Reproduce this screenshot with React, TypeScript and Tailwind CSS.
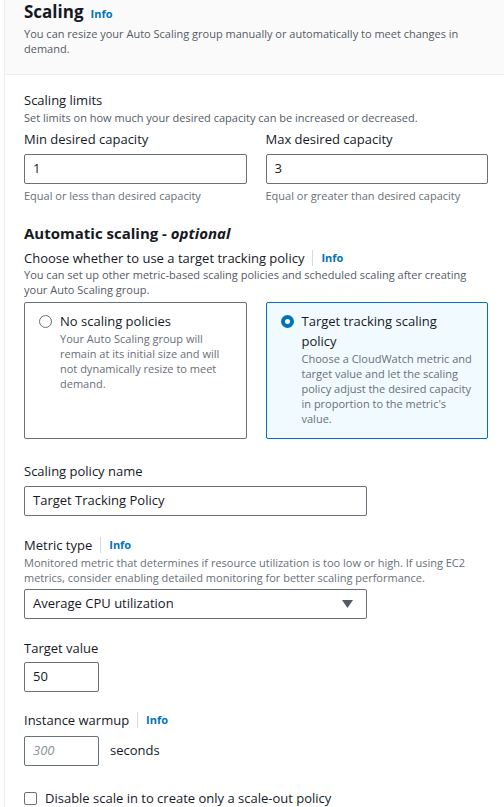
import React from 'react'

const font = { fontFamily: '"Open Sans", "Noto Sans", Arial, sans-serif' }

function Info({ sep }: { sep?: boolean }) {
  return (
    <span className="inline-flex items-center">
      {sep && <span className="mx-[8px] h-[16px] w-px bg-[#d5dbdb]" />}
      <span className="text-[11px] font-bold text-[#0073bb]">Info</span>
    </span>
  )
}

function Label({ children }: { children: React.ReactNode }) {
  return <div className="text-[13px] leading-[20px] text-[#16191f]">{children}</div>
}

function Desc({ children }: { children: React.ReactNode }) {
  return <div className="text-[11px] leading-[15px] text-[#687078]">{children}</div>
}

function Box({ value, w, italic }: { value: string; w: string; italic?: boolean }) {
  return (
    <div
      className={`${w} h-[30px] border border-[#687078] rounded-[2px] bg-white px-[8px] flex items-center text-[13px] ${
        italic ? 'italic text-[#879596]' : 'text-[#16191f]'
      }`}
    >
      {value}
    </div>
  )
}

export default function App() {
  return (
    <div style={font} className="w-[504px] h-[807px] bg-white overflow-hidden">
      <div className="ml-[4px] border-l border-[#eaeded] h-full">
        <div className="bg-[#fafafa] border-b border-[#eaeded] pl-[19px] pr-[20px] pt-[1px] h-[75px]">
          <div className="flex items-baseline gap-[7px]">
            <span className="text-[17px] font-bold leading-[22px] text-[#16191f]">Scaling</span>
            <Info />
          </div>
          <div className="mt-[3px] text-[11px] leading-[15px] text-[#545b64]">
            You can resize your Auto Scaling group manually or automatically to meet changes in demand.
          </div>
        </div>

        <div className="pl-[19px] pr-[16px] pt-[15px]">
          <Label>Scaling limits</Label>
          <div className="text-[11px] leading-[15px] text-[#545b64]">
            Set limits on how much your desired capacity can be increased or decreased.
          </div>

          <div className="mt-[4px] grid grid-cols-2 gap-x-[19px]">
            <div>
              <Label>Min desired capacity</Label>
              <div className="mt-[5px]">
                <Box value="1" w="w-full" />
              </div>
              <div className="mt-[4px]">
                <Desc>Equal or less than desired capacity</Desc>
              </div>
            </div>
            <div>
              <Label>Max desired capacity</Label>
              <div className="mt-[5px]">
                <Box value="3" w="w-full" />
              </div>
              <div className="mt-[4px]">
                <Desc>Equal or greater than desired capacity</Desc>
              </div>
            </div>
          </div>

          <div className="mt-[20px] text-[15px] font-bold leading-[20px] text-[#16191f]">
            Automatic scaling - <i>optional</i>
          </div>
          <div className="mt-[5px] h-[20px] flex items-center text-[13px] leading-[20px] text-[#16191f]">
            Choose whether to use a target tracking policy
            <Info sep />
          </div>
          <div className="mt-[-1px] text-[11px] leading-[15px] text-[#545b64]">
            You can set up other metric-based scaling policies and scheduled scaling after creating your Auto Scaling group.
          </div>

          <div className="mt-[5px] grid grid-cols-2 gap-x-[19px]">
            <div className="h-[137px] border border-[#687078] rounded-[2px] bg-white pl-[14px] pr-[12px] pt-[8px] flex gap-[8px]">
              <span className="mt-[4px] shrink-0 w-[13px] h-[13px] rounded-full border-[1.5px] border-[#687078] bg-white" />
              <div>
                <div className="text-[13px] leading-[20px] text-[#16191f]">No scaling policies</div>
                <div className="text-[11px] leading-[15px] text-[#687078]">
                  Your Auto Scaling group will remain at its initial size and will not dynamically resize to meet demand.
                </div>
              </div>
            </div>
            <div className="h-[137px] border border-[#0073bb] rounded-[2px] bg-[#f1faff] pl-[14px] pr-[12px] pt-[8px] flex gap-[8px]">
              <span className="mt-[4px] shrink-0 w-[13px] h-[13px] rounded-full border-[4px] border-[#0073bb] bg-white" />
              <div>
                <div className="text-[13px] leading-[20px] text-[#16191f]">Target tracking scaling policy</div>
                <div className="text-[11px] leading-[15px] text-[#687078]">
                  Choose a CloudWatch metric and target value and let the scaling policy adjust the desired capacity in proportion to the metric's value.
                </div>
              </div>
            </div>
          </div>

          <div className="mt-[22px]">
            <Label>Scaling policy name</Label>
          </div>
          <div className="mt-[5px]">
            <Box value="Target Tracking Policy" w="w-[343px]" />
          </div>

          <div className="mt-[19px] flex items-center">
            <Label>Metric type</Label>
            <Info sep />
          </div>
          <div className="text-[11px] leading-[15px] text-[#687078]">
            Monitored metric that determines if resource utilization is too low or high. If using EC2 metrics, consider enabling detailed monitoring for better scaling performance.
          </div>
          <div className="mt-[4px] w-[343px] h-[30px] border border-[#687078] rounded-[2px] bg-white pl-[8px] pr-[13px] flex items-center justify-between text-[13px] text-[#16191f]">
            <span>Average CPU utilization</span>
            <svg width="11" height="8" viewBox="0 0 11 8">
              <path d="M0 0 H11 L5.5 8 Z" fill="#545b64" />
            </svg>
          </div>

          <div className="mt-[19px]">
            <Label>Target value</Label>
          </div>
          <div className="mt-[4px]">
            <Box value="50" w="w-[75px]" />
          </div>

          <div className="mt-[18px] flex items-center">
            <Label>Instance warmup</Label>
            <Info sep />
          </div>
          <div className="mt-[6px] flex items-center gap-[11px]">
            <Box value="300" w="w-[75px]" italic />
            <span className="text-[13px] text-[#16191f]">seconds</span>
          </div>

          <div className="mt-[22px] flex items-center gap-[8px]">
            <span className="w-[13px] h-[13px] border border-[#687078] rounded-[2px] bg-white" />
            <span className="text-[13px] leading-[20px] text-[#16191f]">Disable scale in to create only a scale-out policy</span>
          </div>
        </div>
      </div>
    </div>
  )
}
